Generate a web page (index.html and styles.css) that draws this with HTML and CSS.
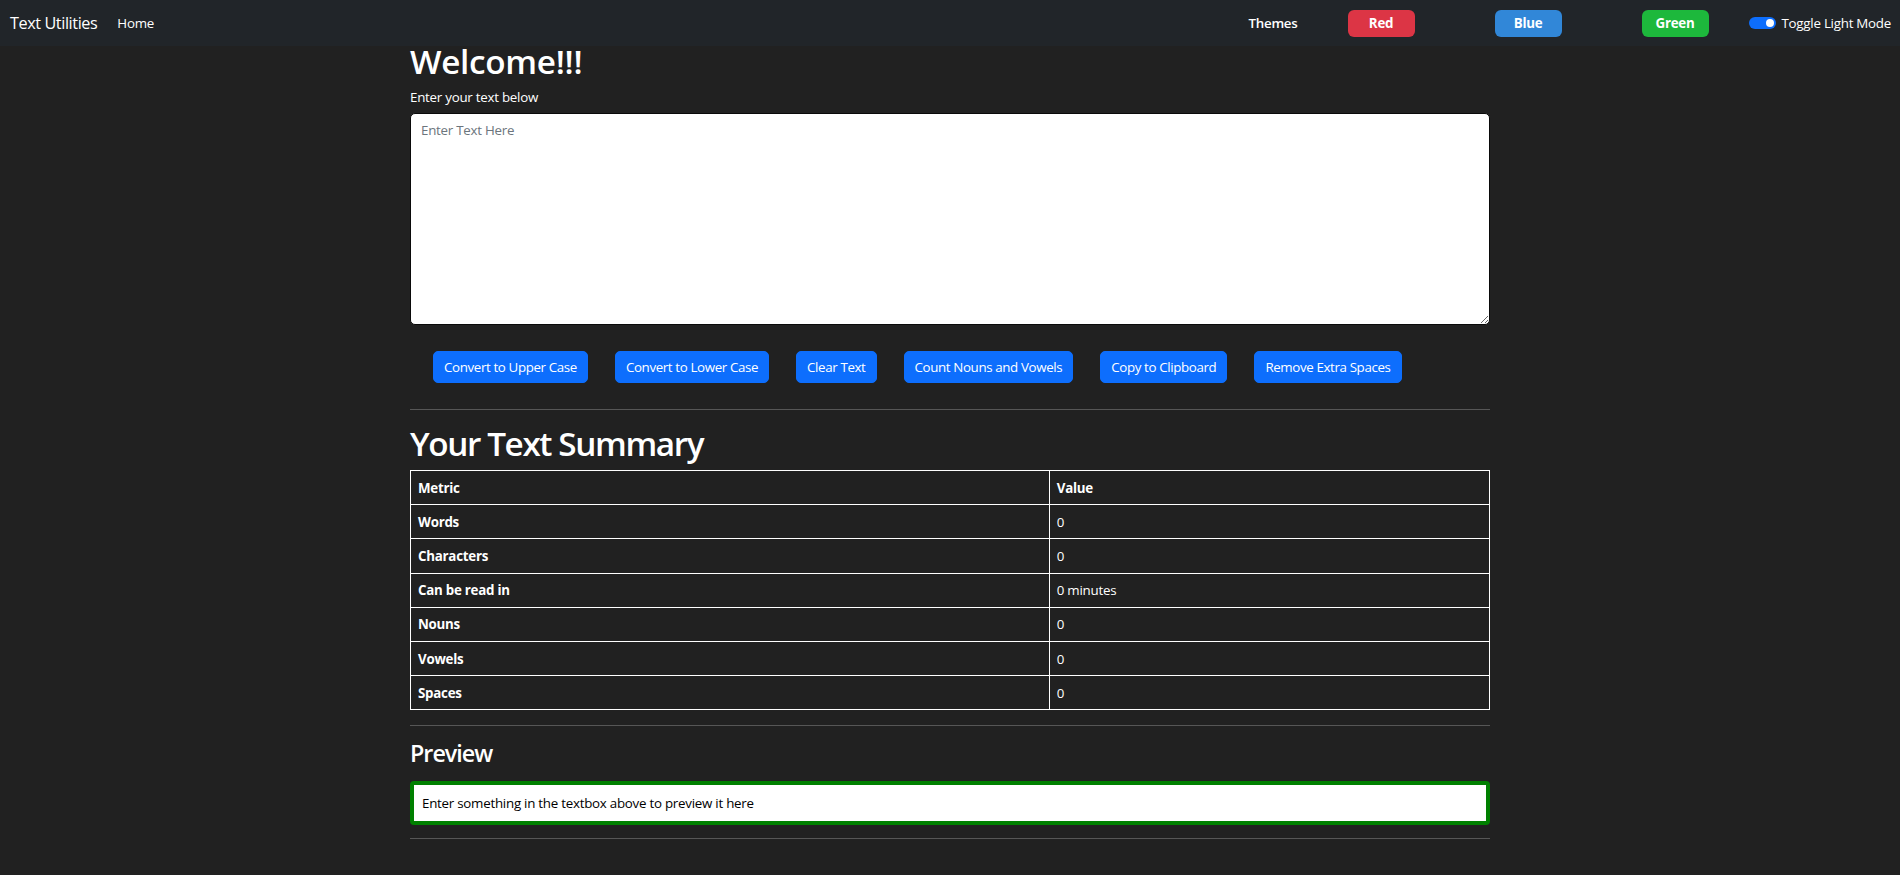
FILE: index.html
```html
<!DOCTYPE html>
<html lang="en">
<head>
<meta charset="utf-8">
<title>Text Utilities</title>
<link rel="stylesheet" href="styles.css">
</head>
<body>
<nav class="navbar">
  <a class="brand" href="#">Text Utilities</a>
  <ul class="nav">
    <li><a class="nav-link" href="#">Home</a></li>
  </ul>
  <div class="nav-right">
    <span class="themes-label">Themes</span>
    <button class="theme-btn red">Red</button>
    <button class="theme-btn blue">Blue</button>
    <button class="theme-btn green">Green</button>
    <label class="switch-wrap">
      <span class="switch"><span class="knob"></span></span>
      <span class="switch-text">Toggle Light Mode</span>
    </label>
  </div>
</nav>

<main class="container">
  <h1 class="title">Welcome!!!</h1>
  <label class="form-label" for="box">Enter your text below</label>
  <textarea id="box" class="textbox" placeholder="Enter Text Here"></textarea>

  <div class="actions">
    <button class="btn">Convert to Upper Case</button>
    <button class="btn">Convert to Lower Case</button>
    <button class="btn">Clear Text</button>
    <button class="btn">Count Nouns and Vowels</button>
    <button class="btn">Copy to Clipboard</button>
    <button class="btn">Remove Extra Spaces</button>
  </div>

  <hr class="rule rule-1">

  <h1 class="summary-title">Your Text Summary</h1>
  <table class="summary">
    <colgroup><col class="col-metric"><col></colgroup>
    <tbody>
      <tr><th>Metric</th><th>Value</th></tr>
      <tr><th>Words</th><td>0</td></tr>
      <tr><th>Characters</th><td>0</td></tr>
      <tr><th>Can be read in</th><td>0 minutes</td></tr>
      <tr><th>Nouns</th><td>0</td></tr>
      <tr><th>Vowels</th><td>0</td></tr>
      <tr><th>Spaces</th><td>0</td></tr>
    </tbody>
  </table>

  <hr class="rule rule-2">

  <h3 class="preview-title">Preview</h3>
  <div class="preview">Enter something in the textbox above to preview it here</div>

  <hr class="rule rule-3">
</main>
</body>
</html>
```

FILE: styles.css
```css
* { box-sizing: border-box; }

html, body {
  margin: 0;
  padding: 0;
}

body {
  background: #212121;
  color: #fff;
  font-family: "Open Sans", "Noto Sans", sans-serif;
  font-size: 13.33px;
  line-height: 20px;
  letter-spacing: -0.25px;
}

/* ---------- navbar ---------- */
.navbar {
  display: flex;
  align-items: center;
  height: 46px;
  padding: 0 9px 0 10px;
  background: #212529;
}

.brand {
  color: #fff;
  text-decoration: none;
  font-size: 16.2px;
  line-height: 25px;
  margin-right: 13px;
  letter-spacing: -0.4px;
}

.nav {
  list-style: none;
  margin: 0;
  padding: 0;
  display: flex;
}

.nav-link {
  display: block;
  color: #fff;
  text-decoration: none;
  padding: 6px 7px;
}

.nav-right {
  margin-left: auto;
  display: flex;
  align-items: center;
}

.themes-label {
  font-weight: 600;
  margin-right: 50px;
}

.theme-btn {
  width: 67px;
  height: 27px;
  border: 0;
  border-radius: 6px;
  color: #fff;
  font-family: inherit;
  font-size: 13.33px;
  font-weight: 700;
  letter-spacing: -0.25px;
  padding: 0;
  margin-right: 80px;
}

.theme-btn.green { margin-right: 40px; }
.theme-btn.red { background: #dc3545; }
.theme-btn.blue { background: #3187d8; }
.theme-btn.green { background: #1db83c; }

.switch-wrap {
  display: flex;
  align-items: center;
}

.switch {
  display: flex;
  justify-content: flex-end;
  align-items: center;
  width: 27px;
  height: 12px;
  padding: 0 2px;
  border-radius: 6px;
  background: #0d6efd;
  margin-right: 6px;
}

.knob {
  width: 8px;
  height: 8px;
  border-radius: 50%;
  background: #fff;
}

/* ---------- main ---------- */
.container {
  width: 1080px;
  margin: 0 auto;
}

.title,
.summary-title {
  font-size: 33.3px;
  font-weight: 600;
  margin: 0;
}

.title {
  line-height: 30px;
  letter-spacing: -0.3px;
}

.form-label {
  display: block;
  margin-top: 11px;
  margin-bottom: 6px;
}

.textbox {
  display: block;
  width: 100%;
  height: 212px;
  padding: 6px 10px;
  border: 1px solid #0a0a0a;
  border-radius: 5px;
  background: #fff;
  color: #212529;
  font-family: inherit;
  font-size: 13.33px;
  line-height: 20px;
  letter-spacing: -0.25px;
  resize: vertical;
}

.textbox::placeholder { color: #6c757d; }

.actions {
  display: flex;
  gap: 27px;
  padding-left: 23px;
  margin-top: 26px;
}

.btn {
  background: #0d6efd;
  color: #fff;
  border: 1px solid #0d6efd;
  border-radius: 5px;
  padding: 5px 10px;
  font-family: inherit;
  font-size: 13.33px;
  line-height: 20px;
  letter-spacing: -0.37px;
}

.rule {
  border: 0;
  border-top: 1px solid #565656;
  margin: 0;
}

.rule-1 { margin-top: 26px; }

.summary-title {
  line-height: 40px;
  letter-spacing: -1.4px;
  margin-top: 13px;
  margin-bottom: 7px;
}

.summary {
  width: 100%;
  border-collapse: collapse;
  border: 1px solid #fff;
}

.col-metric { width: 59.2%; }

.summary th,
.summary td {
  border: 1px solid #fff;
  padding: 6.5px 7px;
  text-align: left;
  line-height: 20.2px;
  vertical-align: top;
}

.summary th { font-weight: 700; }
.summary td { font-weight: 400; }

.rule-2 { margin-top: 15px; }

.preview-title {
  font-size: 23.3px;
  font-weight: 600;
  line-height: 28px;
  letter-spacing: -1px;
  margin: 13px 0 14px;
}

.preview {
  background: #fff;
  color: #000;
  border: 4px solid #008000;
  border-radius: 4px;
  padding: 8px 8px;
  line-height: 20px;
}

.rule-3 { margin-top: 13px; }
```
